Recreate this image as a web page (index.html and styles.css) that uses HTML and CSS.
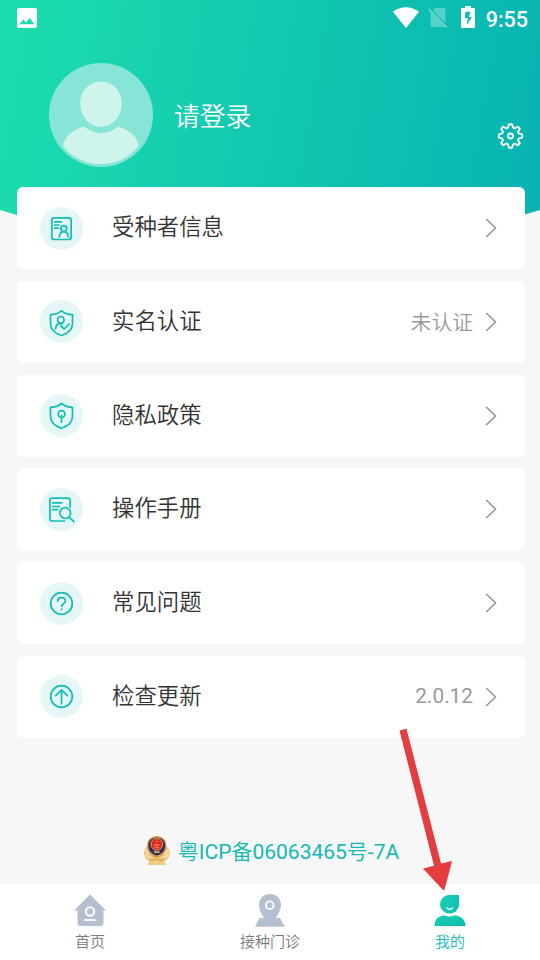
FILE: index.html
```
<!DOCTYPE html>
<html lang="zh-CN">
<head>
<meta charset="utf-8">
<title>我的</title>
<link rel="stylesheet" href="styles.css">
</head>
<body>
<svg class="defs" width="0" height="0" aria-hidden="true">
  <symbol id="chevron" viewBox="0 0 12 20"><path d="M1.200 1l9.300 9-9.300 9" fill="none" stroke="#92939b" stroke-width="1.500"/></symbol>
  <symbol id="shield" viewBox="0 0 43 43"><path d="M21.500 10.800c3.200 2.500 7 3.700 11 3.900v8.600c0 6-4.800 10.300-11 12.200-6.200-1.900-11-6.200-11-12.200v-8.600c4-.2 7.800-1.400 11-3.900z"/></symbol>
</svg>
<div class="app">
  <header class="hero">
    <div class="status">
      <svg class="picture" width="20" height="20" viewBox="0 0 20 20"><path fill="#fff" fill-rule="evenodd" d="M2 0h16a2 2 0 0 1 2 2v16a2 2 0 0 1-2 2H2a2 2 0 0 1-2-2V2a2 2 0 0 1 2-2zM2.500 16.300h15L12.700 10l-3.700 4.500-2.600-3z"/></svg>
      <svg class="wifi" width="26" height="21" viewBox="0 0 26 21"><path fill="#fff" d="M0 4.800C7.500-1.400 18.500-1.400 26 4.800L13 21z"/></svg>
      <svg class="sim" width="20" height="21" viewBox="0 0 20 21"><path fill="#fff" opacity=".3" d="M7 1h9q1.500 0 1.500 1.500v13.700L4.800 3.300zM2.500 5L17 19.800q-.5.200-1 .2H4q-1.500 0-1.500-1.500z"/><path d="M.7 2L19 20.500" stroke="#fff" stroke-width="1.500" opacity=".42"/></svg>
      <svg class="battery" width="14" height="22" viewBox="0 0 14 22"><path fill="#fff" fill-rule="evenodd" d="M4 0h6v2h4v20H0V2h4zM4.500 5.800L3.800 12h3l-1 7.300 5-8.300H7.700l2-5.200z"/></svg>
      <time class="clock">9:55</time>
    </div>
    <div class="profile">
      <svg class="avatar" width="104" height="104" viewBox="0 0 104 104">
        <circle cx="52" cy="52" r="52" fill="#86e5d6"/>
        <path fill="#cff4ec" d="M52 18.600c12 0 20.700 9.500 20.700 22C72.700 53.500 63.500 64 52 64S31.300 53.500 31.300 40.600c0-12.500 8.700-22 20.700-22z"/>
        <path fill="#cff4ec" d="M35 63.500C45 72.200 59 72.200 69 63.500 79 66 88 73 89.800 83 80 95 67 101 52 101S24 95 14 83.500C15 73 25 66 35 63.500z"/>
      </svg>
      <h1 class="login">请登录</h1>
      <svg class="gear" width="27" height="26" viewBox="-13.500 -13 27 26" fill="none" stroke="#fff" stroke-width="1.900" stroke-linejoin="round"><path d="M-1.700-11.500Q0-12 1.700-11.500L2.600-8.200 4.200-7.500 7-9.300Q8.500-8.500 9.300-7L7.500-4.200 8.200-2.600 11.500-1.700Q12 0 11.500 1.700L8.200 2.600 7.500 4.200 9.300 7Q8.500 8.500 7 9.300L4.200 7.500 2.600 8.200 1.700 11.500Q0 12-1.700 11.500L-2.600 8.200-4.200 7.500-7 9.300Q-8.500 8.500-9.300 7L-7.500 4.200-8.200 2.600-11.500 1.700Q-12 0-11.500-1.700L-8.200-2.600-7.500-4.200-9.300-7Q-8.500-8.500-7-9.300L-4.200-7.500-2.600-8.200z"/><circle r="2.500"/></svg>
    </div>
  </header>
  <main class="menu">
    <a class="card">
      <svg class="icon" viewBox="0 0 43 43"><rect x="11.800" y="10.800" width="19.400" height="21.700" rx="2.500"/><path d="M14.500 14.800h7M14.500 18h4.500M14.500 21.200h4M19.300 30c.3-3.300 2-5.300 4.500-5.300s4.200 2 4.600 5.300"/><circle cx="23.800" cy="21.600" r="3"/></svg>
      <span class="label">受种者信息</span><svg class="chevron"><use href="#chevron"/></svg>
    </a>
    <a class="card">
      <svg class="icon" viewBox="0 0 43 43"><use href="#shield"/><circle cx="20.800" cy="20" r="3.300"/><path d="M15.500 28.800c.3-3.300 2-5.500 5.300-5.500M20.800 23.300l1.600.600M20.800 26l3.300 3 5-4.800"/></svg>
      <span class="label">实名认证</span><span class="value">未认证</span><svg class="chevron"><use href="#chevron"/></svg>
    </a>
    <a class="card">
      <svg class="icon" viewBox="0 0 43 43"><use href="#shield" y="-1.300"/><circle cx="21.500" cy="20" r="3.400"/><path d="M21.500 21.400v6.900"/></svg>
      <span class="label">隐私政策</span><svg class="chevron"><use href="#chevron"/></svg>
    </a>
    <a class="card">
      <svg class="icon" viewBox="0 0 43 43"><path d="M24.600 33H12.500q-2.600 0-2.600-2.600V12.700q0-2.600 2.600-2.600h15q2.600 0 2.600 2.600v6.600M12.600 14.900h9.300M12.600 18.500h6.800M12.600 21.700h5M29.600 29.400l4.200 4.200"/><circle cx="25.200" cy="25.100" r="5.400"/></svg>
      <span class="label">操作手册</span><svg class="chevron"><use href="#chevron"/></svg>
    </a>
    <a class="card">
      <svg class="icon" viewBox="0 0 43 43"><circle cx="21.500" cy="21.500" r="10.800"/><path d="M17.700 19.300c0-2.400 1.500-3.600 3.800-3.600s3.900 1.200 3.900 3.200c0 2.700-3.700 2.900-3.700 5.300M21.500 27.200v.3"/></svg>
      <span class="label">常见问题</span><svg class="chevron"><use href="#chevron"/></svg>
    </a>
    <a class="card">
      <svg class="icon" viewBox="0 0 43 43"><circle cx="21.500" cy="21.500" r="10.800"/><path d="M21.500 28.600V15.300M15.600 20.700l5.900-5.800 5.900 5.800"/></svg>
      <span class="label">检查更新</span><span class="value number">2.0.12</span><svg class="chevron"><use href="#chevron"/></svg>
    </a>
  </main>
  <footer class="record">
    <svg width="28" height="30" viewBox="0 0 28 30">
      <path fill="#efcb86" d="M4.500 10C2 11.500.5 15.500 1.200 19c.8 3.500 3 5.300 5 6L4.500 29h18.500l-1.500-4c3-1 5-3.500 5.300-6.500.3-4-1-7-3.800-8.500z"/>
      <path d="M2.500 14l4 4M2.500 19l6 3M25.500 14l-4 4M25.500 19l-6 3" stroke="#fbe8bb" stroke-width="1.200"/>
      <path fill="#d99b48" d="M13.800 0C20 .5 23.500 4 23.500 9.500c0 7-4 11-9.700 12.500C8 20.500 4 16.500 4 9.500 4 4 7.500.5 13.800 0z"/>
      <path fill="#2b2c6c" d="M13.800 1.500c5 .3 8.400 3 8.400 8 0 5.500-3.500 9-8.400 10-4.900-1-8.400-4.500-8.400-10 0-5 3.400-7.700 8.400-8z"/>
      <circle cx="13.800" cy="8.300" r="5.900" fill="#d92b20" stroke="#dda245" stroke-width="1"/>
      <path d="M13.800 4.500v2M11 9h5.600M11.500 11.500h4.600" stroke="#f37a49" stroke-width="1.300"/>
      <path d="M11 15.500q2.800 1.500 5.600 0" fill="none" stroke="#e7ae54" stroke-width="1.500"/>
      <path d="M6 23q4 2.500 7.800 0 4 2.500 7.700 0" fill="none" stroke="#dda24e" stroke-width="1.300"/>
    </svg>
    <span>粤ICP备06063465号-7A</span>
  </footer>
  <nav class="tabs">
    <a class="tab"><svg width="34" height="34" viewBox="0 0 34 34"><path fill="#b6bfcf" d="M17 1.500L33 17.500h-2.500V30q0 3-3 3h-20q-3 0-3-3V17.500H1z"/><circle cx="17" cy="18.500" r="4.200" fill="none" stroke="#fff" stroke-width="1.900"/><path d="M11 27h11.500" stroke="#fff" stroke-width="1.800"/></svg><span>首页</span></a>
    <a class="tab"><svg width="34" height="34" viewBox="0 0 34 34"><path fill="#b6bfcf" d="M17 1c6.500 0 11 4.700 11 11 0 5-2.500 9-5.300 13H27l5 8.700H2L6.500 25h4.800C8.500 21 6 17 6 12 6 5.700 10.500 1 17 1z"/><circle cx="16.700" cy="12.200" r="3.800" fill="none" stroke="#fff" stroke-width="1.900"/></svg><span>接种门诊</span></a>
    <a class="tab active"><svg width="34" height="34" viewBox="0 0 34 34"><defs><linearGradient id="person" x1="0" y1="0" x2="1" y2="1"><stop stop-color="#19d1af"/><stop offset="1" stop-color="#0dbbb2"/></linearGradient></defs><path fill="url(#person)" d="M16 2h10v10a9.500 9.300 0 1 1-10-10z"/><path fill="url(#person)" d="M1.500 33C1.500 27 5 23 11 22.300q6 2.400 11 0C28 23 32.500 27 32.500 33z"/><path d="M13.500 14.500q3.500 3.500 6.500 0" fill="none" stroke="#fff" stroke-width="1.300"/></svg><span>我的</span></a>
  </nav>
  <svg class="pointer" width="60" height="170" viewBox="0 0 60 170"><path fill="#e43d3d" d="M6.500 10.500l7-1.700 34.600 134.700 11-2.500-8 30.200L30 148.500l11-2.700z"/></svg>
</div>
</body>
</html>
```
FILE: styles.css
```
* { box-sizing: border-box; }
body {
  margin: 0;
  font-family: Roboto, "Noto Sans CJK SC DemiLight", "Noto Sans CJK SC", sans-serif;
  background: #f7f7f7;
}
.defs { display: block; position: absolute; }
.app {
  position: relative;
  width: 540px;
  height: 960px;
  display: flex;
  flex-direction: column;
  overflow: hidden;
}
.hero {
  flex: none;
  height: 220px;
  color: #fff;
  background: linear-gradient(100deg, #1cdead 0%, #12c8b0 50%, #07b3b2 100%);
  clip-path: polygon(0 0, 100% 0, 100% 210px, 523px 215px, 17px 215px, 0 210px);
}
.status {
  display: flex;
  align-items: flex-start;
  height: 63px;
  padding: 6px 12px 0 17px;
}
.picture { margin-top: 2px; }
.wifi { margin: 1px 9px 0 auto; }
.sim { margin: 1px 13px 0 0; }
.battery { margin-right: 11px; }
.clock {
  font-size: 21.500px;
  line-height: 27px;
  font-weight: 500;
}
.profile {
  display: flex;
  height: 104px;
  padding: 0 16px 0 49px;
}
.login {
  margin: 35px auto 0 21px;
  font-size: 25.800px;
  line-height: 38px;
  font-weight: 350;
}
.gear { margin-top: 60px; }
.menu {
  flex: none;
  position: relative;
  margin: -33px 15px 0 17px;
  display: grid;
  grid-auto-rows: 82px;
  gap: 11.800px;
}
.card {
  display: flex;
  align-items: center;
  padding: 0 28px 0 23px;
  border-radius: 6px;
  background: #fff;
}
.icon {
  width: 43px;
  height: 43px;
  border-radius: 50%;
  background: #e4f7f6;
  fill: none;
  stroke: #13bdb5;
  stroke-width: 1.700;
  stroke-linecap: round;
  stroke-linejoin: round;
}
.label {
  margin: -6px auto 0 29px;
  font-size: 22.400px;
  font-weight: 350;
  color: #333;
}
.value {
  margin: -1px 12px 0 0;
  font-size: 20.800px;
  font-weight: 350;
  color: #999;
}
.number {
  margin-top: -2px;
  font-weight: 400;
}
.chevron { width: 12px; height: 20px; }
.record {
  display: flex;
  align-items: center;
  justify-content: center;
  gap: 7px;
  height: 32px;
  margin: 97px 0 17px 2px;
  font-size: 21px;
  color: #12b8b3;
}
.record span { margin-top: -2px; }
.tabs {
  height: 76px;
  display: grid;
  grid-template-columns: repeat(3, 1fr);
  background: #fff;
}
.tab {
  display: flex;
  flex-direction: column;
  align-items: center;
  padding-top: 9px;
  font-size: 15px;
  line-height: 22px;
  color: #777980;
}
.tab span { margin-top: 4px; }
.active { color: #13bab3; }
.pointer { position: absolute; left: 393px; top: 720px; }
```
